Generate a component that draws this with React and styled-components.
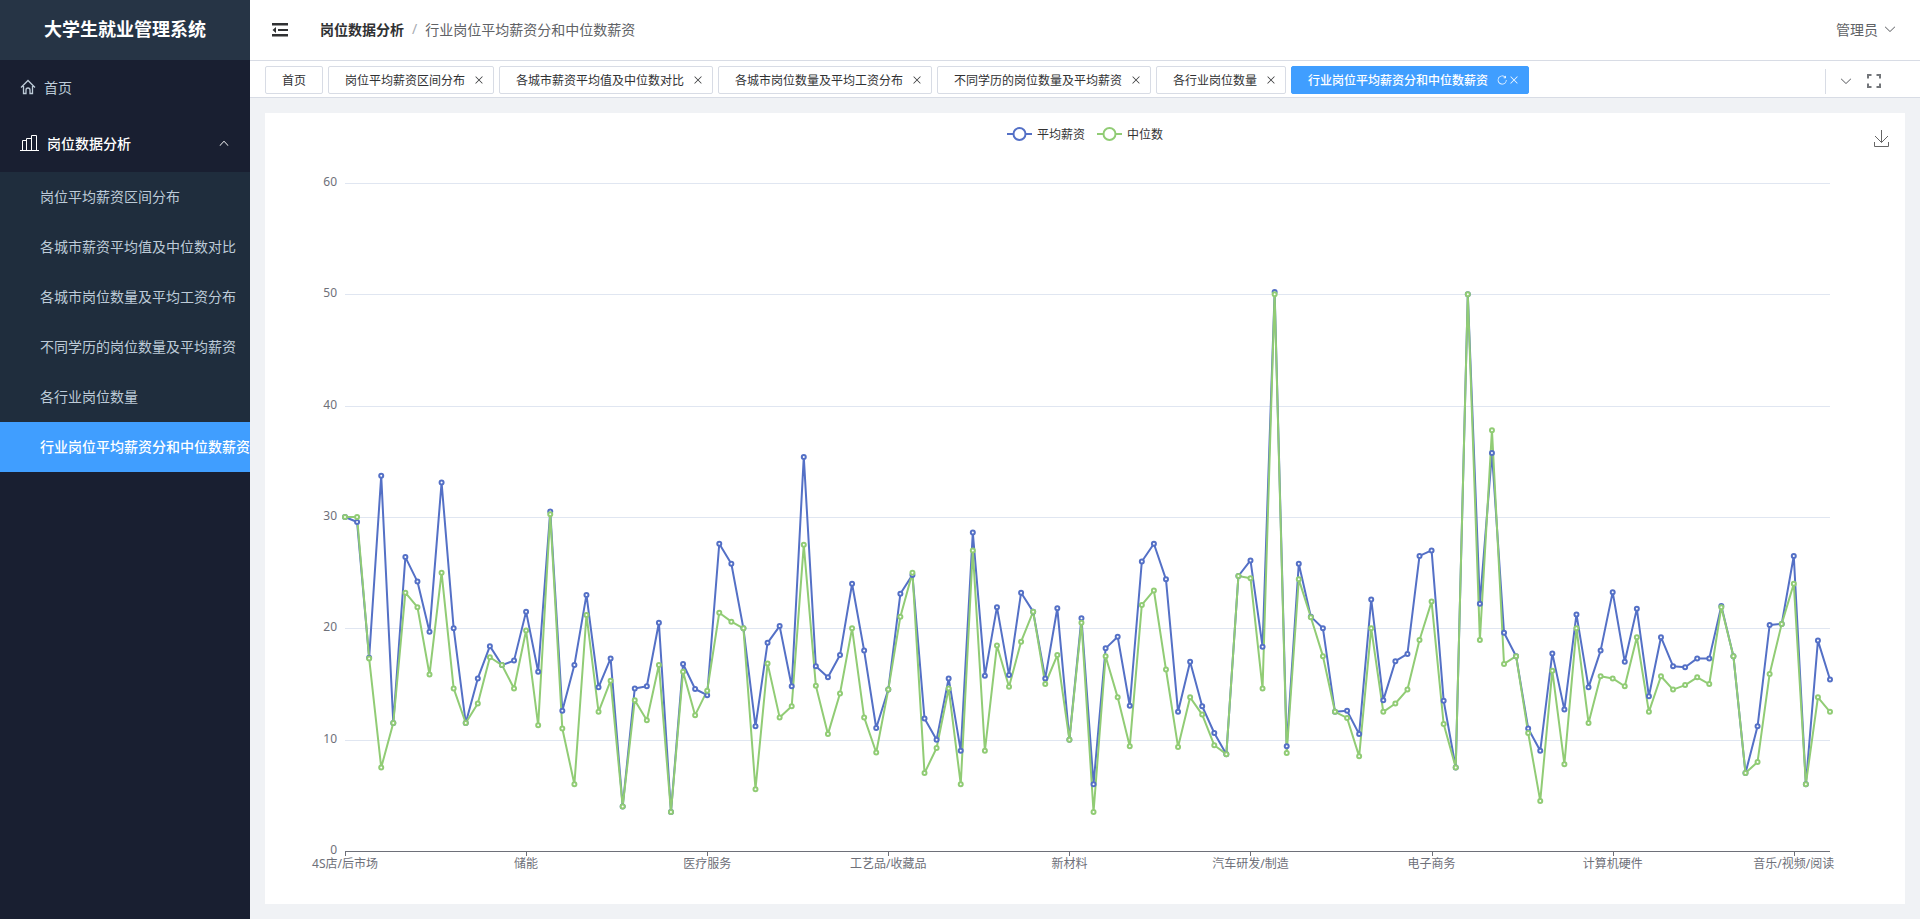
import React, { useLayoutEffect, useRef, useState } from 'react'
import styled, { createGlobalStyle, css } from 'styled-components'

const GlobalStyle = createGlobalStyle`
  * {
    box-sizing: border-box;
  }

  body {
    margin: 0;
    font-family: 'Noto Sans', 'Noto Sans CJK SC', sans-serif;
    font-size: 14px;
    color: #303133;
  }

  button {
    font-family: inherit;
    font-size: inherit;
    color: inherit;
    background: none;
    border: 0;
    padding: 0;
    cursor: pointer;
  }

  a {
    color: inherit;
    text-decoration: none;
  }
`

const Layout = styled.div`
  display: flex;
  min-height: 100vh;
`

const Sidebar = styled.aside`
  flex: 0 0 250px;
  width: 250px;
  background-color: #191f31;
  color: #bdcbd8;
  overflow: hidden;
`

const Brand = styled.h1`
  margin: 0;
  height: 60px;
  line-height: 58px;
  background-color: #263445;
  color: #fff;
  font-size: 18px;
  font-weight: 700;
  text-align: center;
`

const MenuItem = styled.a`
  display: flex;
  align-items: center;
  gap: 8px;
  height: 56px;
  padding: 0 20px 2px;
`

const MenuTitle = styled.button`
  display: flex;
  align-items: center;
  gap: 8px;
  width: 100%;
  height: 56px;
  padding: 0 20px 2px;
  color: #fff;
  font-weight: 500;

  svg:last-child {
    margin-left: auto;
  }
`

const SubMenu = styled.nav`
  background-color: #1f2d3d;
`

const SubItem = styled.a`
  display: block;
  height: 50px;
  line-height: 50px;
  padding-left: 40px;
  white-space: nowrap;
  ${props => props.$active && css`
    background-color: #409eff;
    color: #fff;
    font-weight: 500;
  `}
`

const Content = styled.div`
  flex: 1;
  min-width: 0;
  display: flex;
  flex-direction: column;
  background-color: #f0f2f5;
`

const Header = styled.header`
  display: flex;
  align-items: center;
  height: 61px;
  padding: 0 23px 2px 20px;
  background-color: #fff;
  border-bottom: 1px solid #d8dce5;
`

const FoldButton = styled.button`
  display: flex;
  margin-right: 30px;
`

const Breadcrumb = styled.nav`
  display: flex;
  gap: 8px;
  color: #606266;

  a {
    color: #303133;
    font-weight: 700;
  }

  i {
    color: #a8abb2;
    font-style: normal;
  }
`

const UserButton = styled.button`
  display: flex;
  align-items: center;
  gap: 5px;
  margin-left: auto;
  color: #606266;
`

const TagsBar = styled.div`
  display: flex;
  align-items: flex-end;
  gap: 5px;
  height: 37px;
  padding: 0 20px 3px 15px;
  background-color: #fff;
  border-bottom: 1px solid #d8dce5;
`

const Tag = styled.div`
  display: flex;
  align-items: center;
  height: 28px;
  padding: 0 ${props => (props.$closable ? '8px' : '16px')} 0 16px;
  border: 1px solid #d8dce5;
  border-radius: 2px;
  font-size: 12px;
  white-space: nowrap;
  ${props => props.$active && css`
    border-color: #409eff;
    background-color: #409eff;
    color: #fff;
    font-weight: 500;
  `}
`

const TagButtons = styled.span`
  display: flex;
  margin-left: 8px;

  button {
    display: flex;
  }
`

const TagTools = styled.div`
  display: flex;
  align-items: center;
  gap: 13px;
  height: 25px;
  margin-left: auto;
  padding: 0 18px 2px 13px;
  border-left: 1px solid #d8dce5;
  color: #606266;

  button {
    display: flex;
  }
`

const Main = styled.main`
  flex: 1;
  display: flex;
  padding: 15px;
`

const Card = styled.section`
  position: relative;
  flex: 1;
  min-width: 0;
  background-color: #fff;
`

const Legend = styled.div`
  display: flex;
  justify-content: center;
  gap: 12px;
  height: 42px;
  line-height: 42px;
  font-size: 12px;
  color: #333;
`

const LegendItem = styled.button`
  display: flex;
  align-items: center;
  gap: 5px;
`

const SaveButton = styled.button`
  position: absolute;
  top: 17px;
  right: 15px;
  display: flex;
  color: #666;
`

const Plot = styled.div`
  height: calc(100vh - 170px);
  min-height: 300px;

  svg {
    display: block;
  }
`

const AxisText = styled.text`
  font-size: 12px;
  fill: #6e7079;
`

const BLUE = '#5470c6'
const GREEN = '#91cc75'

const average = [
  30, 29.55, 17.35, 33.7, 11.5, 26.4, 24.2, 19.7, 33.1, 20, 11.5, 15.5, 18.4, 16.7, 17.1,
  21.5, 16.1, 30.5, 12.6, 16.7, 23, 14.7, 17.3, 4, 14.6, 14.8, 20.5, 3.5, 16.8, 14.55,
  14, 27.6, 25.8, 20, 11.2, 18.7, 20.2, 14.8, 35.4, 16.6, 15.6, 17.6, 24, 18, 11.05,
  14.5, 23.1, 24.8, 11.9, 10, 15.5, 9, 28.6, 15.75, 21.9, 15.8, 23.2, 21.5, 15.5, 21.8,
  10, 20.9, 6, 18.2, 19.25, 13.05, 26, 27.6, 24.4, 12.5, 17, 13, 10.6, 8.7, 24.7,
  26.1, 18.35, 50.2, 9.4, 25.8, 21.05, 20, 12.5, 12.6, 10.5, 22.6, 13.55, 17.05, 17.7, 26.5,
  27, 13.5, 7.5, 50, 22.2, 35.75, 19.6, 17.5, 11, 9, 17.75, 12.7, 21.25, 14.7, 18,
  23.25, 17, 21.75, 13.9, 19.2, 16.6, 16.5, 17.3, 17.3, 22, 17.5, 7, 11.2, 20.3, 20.4,
  26.5, 6, 18.9, 15.4
]

const median = [
  30, 30, 17.3, 7.5, 11.5, 23.2, 21.9, 15.85, 25, 14.6, 11.5, 13.25, 17.4, 16.7, 14.6,
  19.8, 11.3, 30.25, 11, 6, 21.2, 12.5, 15.3, 4, 13.55, 11.75, 16.7, 3.5, 16.1, 12.2,
  14.4, 21.4, 20.6, 20, 5.55, 16.85, 12, 13, 27.5, 14.85, 10.5, 14.15, 20, 12, 8.85,
  14.5, 21.05, 25, 7, 9.25, 14.6, 6, 27, 9, 18.45, 14.75, 18.8, 21.5, 15, 17.6,
  10, 20.5, 3.5, 17.5, 13.8, 9.4, 22.1, 23.4, 16.3, 9.35, 13.8, 12.25, 9.5, 8.7, 24.7,
  24.5, 14.6, 50, 8.8, 24.4, 21, 17.5, 12.5, 11.95, 8.5, 20, 12.5, 13.25, 14.5, 18.95,
  22.4, 11.4, 7.5, 50, 18.95, 37.8, 16.8, 17.5, 10.6, 4.5, 16.2, 7.8, 20, 11.5, 15.7,
  15.5, 14.8, 19.2, 12.5, 15.7, 14.5, 14.9, 15.6, 15, 21.9, 17.5, 7, 8, 15.9, 20.4,
  24, 6, 13.8, 12.5
]

const series = [
  { name: '平均薪资', color: BLUE, data: average },
  { name: '中位数', color: GREEN, data: median }
]

// one label for every 15 industries
const LABEL_STEP = 15
const labels = ['4S店/后市场', '储能', '医疗服务', '工艺品/收藏品', '新材料', '汽车研发/制造', '电子商务', '计算机硬件', '音乐/视频/阅读']

const ticks = [0, 10, 20, 30, 40, 50, 60]

const subItems = [
  '岗位平均薪资区间分布',
  '各城市薪资平均值及中位数对比',
  '各城市岗位数量及平均工资分布',
  '不同学历的岗位数量及平均薪资',
  '各行业岗位数量',
  '行业岗位平均薪资分和中位数薪资'
]

const current = subItems[5]

// element-plus icons, 1024 grid
const Glyph = ({ size, d }) => (
  <svg width={size} height={size} viewBox="0 0 1024 1024" fill="currentColor" aria-hidden="true">
    <path d={d}/>
  </svg>
)

const ARROW_DOWN = 'M831.872 340.864 512 652.672 192.128 340.864a30.592 30.592 0 0 0-42.752 0 29.12 29.12 0 0 0 0 41.6L489.664 714.24a32 32 0 0 0 44.672 0l340.288-331.712a29.12 29.12 0 0 0 0-41.728 30.592 30.592 0 0 0-42.752 0z'
const ARROW_UP = 'm488.832 344.32-339.84 356.672a32 32 0 0 0 0 44.16l.384.384a29.44 29.44 0 0 0 42.688 0l320-335.872 319.872 335.872a29.44 29.44 0 0 0 42.688 0l.384-.384a32 32 0 0 0 0-44.16L535.168 344.32a32 32 0 0 0-46.336 0z'
const CLOSE = 'M764.288 214.592 512 466.88 259.712 214.592a31.936 31.936 0 0 0-45.12 45.12L466.752 512 214.528 764.224a31.936 31.936 0 1 0 45.12 45.184L512 557.184l252.288 252.288a31.936 31.936 0 0 0 45.12-45.12L557.12 512.064l252.288-252.352a31.936 31.936 0 1 0-45.12-45.184z'
const REFRESH = 'M784.512 230.272v-50.56a32 32 0 1 1 64 0v149.056a32 32 0 0 1-32 32H667.52a32 32 0 1 1 0-64h92.992A320 320 0 1 0 524.8 833.152a320 320 0 0 0 320-320h64a384 384 0 0 1-384 384 384 384 0 0 1-384-384 384 384 0 0 1 643.712-282.88z'

const HomeIcon = () => (
  <svg width="16" height="16" viewBox="0 0 16 16" fill="none" stroke="currentColor" strokeWidth="1.300" aria-hidden="true">
    <path d="M1 8.500 8 1.500l7 7M3.500 7v7.500H6V11a2 2 0 0 1 4 0v3.500h2.500V7"/>
  </svg>
)

const BarsIcon = () => (
  <svg width="19" height="18" viewBox="0 0 19 18" fill="none" stroke="currentColor" aria-hidden="true">
    <path d="M0 16.500h19M2.500 16V6.500h4V16M6.500 16V4.500h5V16M11.500 16V1.500h5V16"/>
  </svg>
)

const FoldIcon = () => (
  <svg width="20" height="20" viewBox="0 0 20 20" fill="currentColor" aria-hidden="true">
    <path d="M2 4h16v2.500H2zM8 10h10v2H8zM2 15h16v2.500H2zM6 8v6L2.500 11z"/>
  </svg>
)

const FullIcon = () => (
  <svg width="16" height="16" viewBox="0 0 16 16" fill="none" stroke="#73767a" strokeWidth="2" aria-hidden="true">
    <path d="M2 5.500V2h3.500M10.500 2H14v3.500M14 10.500V14h-3.500M5.500 14H2v-3.500"/>
  </svg>
)

const SaveIcon = () => (
  <svg width="18" height="17" viewBox="0 0 18 17" fill="none" stroke="currentColor" aria-hidden="true">
    <path d="M9.500 0v12.500M3 6l6.500 6.500L16 6M2.500 12v4.500h14V12"/>
  </svg>
)

const Chart = () => {
  const ref = useRef(null)
  const [size, setSize] = useState({ width: 0, height: 0 })

  useLayoutEffect(() => {
    const measure = () => setSize({
      width: ref.current.clientWidth,
      height: ref.current.clientHeight
    })
    measure()
    window.addEventListener('resize', measure)
    return () => window.removeEventListener('resize', measure)
  }, [])

  const left = 80
  const right = size.width - 75
  const top = 28
  const bottom = size.height - 53
  const x = i => left + (right - left) * i / (average.length - 1)
  const y = v => bottom - (bottom - top) * v / 60
  const crisp = n => Math.round(n) + 0.5

  return <Plot ref={ref}>
    {size.width > 0 && <svg width={size.width} height={size.height} role="img" aria-label={current}>
      {ticks.map(v => <g key={v}>
        {v > 0 && <path d={`M${left} ${crisp(y(v))}H${right}`} stroke="#e0e6f1"/>}
        <AxisText x={left - 8} y={y(v) + 3} textAnchor="end">{v}</AxisText>
      </g>)}
      <path d={`M${left} ${crisp(bottom)}H${right}`} stroke="#6e7079"/>
      {labels.map((label, i) => <g key={label}>
        <path d={`M${crisp(x(i * LABEL_STEP))} ${bottom}v5`} stroke="#6e7079"/>
        <AxisText x={x(i * LABEL_STEP)} y={bottom + 17} textAnchor="middle">{label}</AxisText>
      </g>)}
      {series.map(s => <polyline
        key={s.name}
        points={s.data.map((v, i) => `${x(i)},${y(v)}`).join(' ')}
        fill="none"
        stroke={s.color}
        strokeWidth="2"
        strokeLinejoin="bevel"
      />)}
      {series.map(s => s.data.map((v, i) => <circle
        key={s.name + i}
        cx={x(i)}
        cy={y(v)}
        r="2"
        fill="#fff"
        stroke={s.color}
        strokeWidth="2"
      />))}
    </svg>}
  </Plot>
}

const App = () => (
  <Layout>
    <GlobalStyle/>
    <Sidebar>
      <Brand>大学生就业管理系统</Brand>
      <MenuItem href="#"><HomeIcon/>首页</MenuItem>
      <MenuTitle aria-expanded="true">
        <BarsIcon/>岗位数据分析<Glyph size={12} d={ARROW_UP}/>
      </MenuTitle>
      <SubMenu>
        {subItems.map(item => <SubItem key={item} href="#" $active={item === current}>{item}</SubItem>)}
      </SubMenu>
    </Sidebar>
    <Content>
      <Header>
        <FoldButton aria-label="折叠菜单"><FoldIcon/></FoldButton>
        <Breadcrumb>
          <a href="#">岗位数据分析</a>
          <i>/</i>
          <span>{current}</span>
        </Breadcrumb>
        <UserButton>管理员<Glyph size={14} d={ARROW_DOWN}/></UserButton>
      </Header>
      <TagsBar>
        <Tag><a href="#">首页</a></Tag>
        {subItems.map(item => <Tag key={item} $closable $active={item === current}>
          <a href="#">{item}</a>
          <TagButtons>
            {item === current && <button aria-label="刷新"><Glyph size={12} d={REFRESH}/></button>}
            <button aria-label="关闭"><Glyph size={12} d={CLOSE}/></button>
          </TagButtons>
        </Tag>)}
        <TagTools>
          <button aria-label="更多"><Glyph size={14} d={ARROW_DOWN}/></button>
          <button aria-label="全屏"><FullIcon/></button>
        </TagTools>
      </TagsBar>
      <Main>
        <Card>
          <Legend>
            {series.map(s => <LegendItem key={s.name}>
              <svg width="25" height="14" fill="#fff" stroke={s.color} strokeWidth="2" aria-hidden="true">
                <path d="M0 7h25"/>
                <circle cx="12.500" cy="7" r="6"/>
              </svg>
              {s.name}
            </LegendItem>)}
          </Legend>
          <SaveButton aria-label="保存为图片"><SaveIcon/></SaveButton>
          <Chart/>
        </Card>
      </Main>
    </Content>
  </Layout>
)

export default App
